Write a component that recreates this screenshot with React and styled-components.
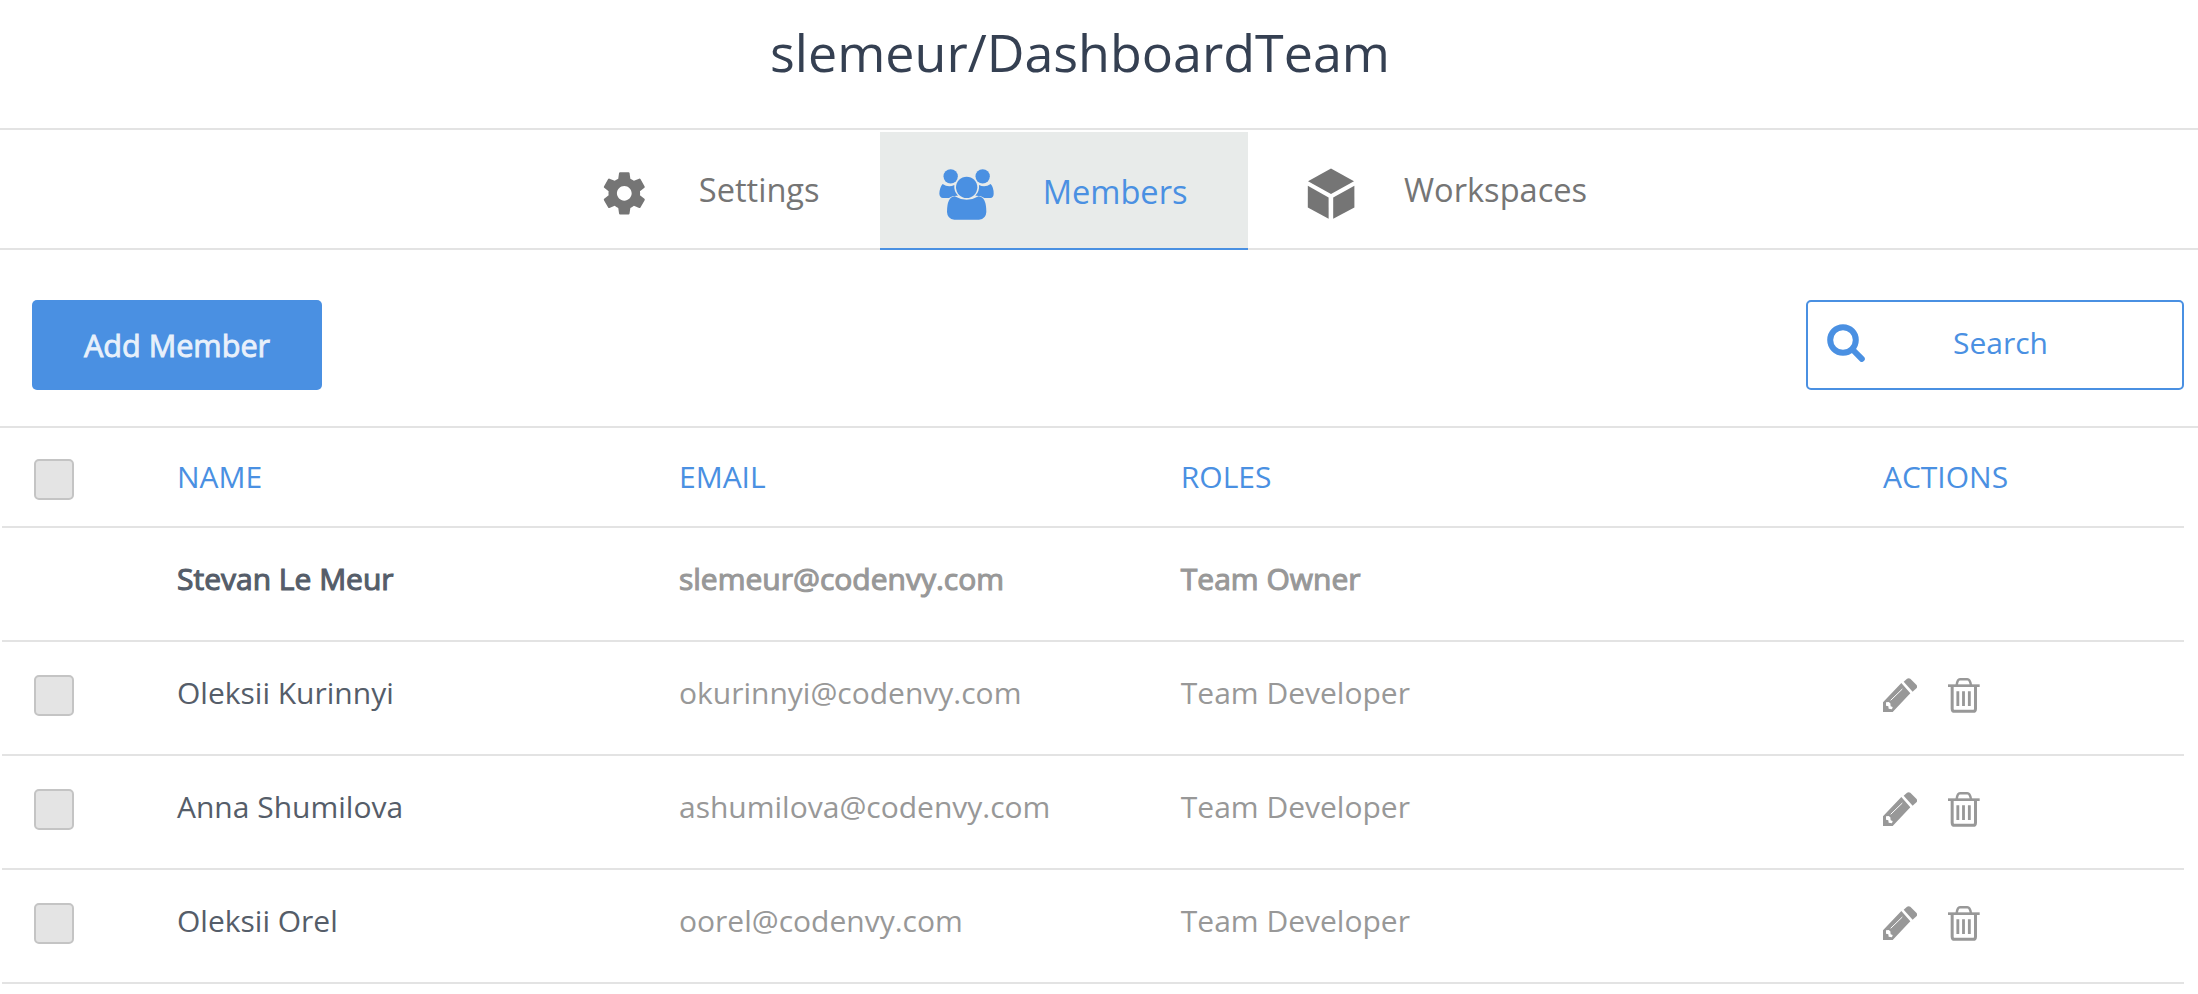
import React from 'react';
import styled, { createGlobalStyle, css } from 'styled-components';

const BLUE = '#4a90e2';
const LINE = '#e3e3e3';

const GlobalStyle = createGlobalStyle`
  *, *::before, *::after { box-sizing: border-box; }
  body {
    margin: 0;
    background: #fff;
    font-family: 'Open Sans', 'Noto Sans', sans-serif;
    overflow: hidden;
  }
`;

const Page = styled.div`
  height: 994px;
  background: #fff;
  display: flex;
  flex-direction: column;
`;

const TitleBar = styled.header`
  flex: none;
  height: 130px;
  padding: 17px 38px 0 0;
  border-bottom: 2px solid ${LINE};
  text-align: center;
`;

const Title = styled.h1`
  margin: 0;
  font-size: 52px;
  line-height: 70px;
  font-weight: 400;
  color: #354052;
`;

const Tabs = styled.nav`
  flex: none;
  height: 120px;
  padding: 2px 0 0 561px;
  display: flex;
  border-bottom: 2px solid ${LINE};
`;

const Tab = styled.button`
  height: 118px;
  width: ${(p) => p.$width}px;
  padding: ${(p) => (p.$active ? 3 : 0)}px 0 0 ${(p) => p.$inset}px;
  border: 0;
  border-bottom: 2px solid ${(p) => (p.$active ? BLUE : 'transparent')};
  background: ${(p) => (p.$active ? '#e8ebea' : 'transparent')};
  color: ${(p) => (p.$active ? BLUE : '#757575')};
  display: flex;
  align-items: center;
  gap: ${(p) => p.$gap}px;
  font: 400 32.6px/44px 'Open Sans', sans-serif;
  text-align: left;

  svg { flex: none; display: block; margin-top: ${(p) => p.$drop}px; }
`;

const Toolbar = styled.div`
  flex: none;
  height: 178px;
  padding: 50px 14px 0 32px;
  display: flex;
  justify-content: space-between;
  align-items: flex-start;
  border-bottom: 2px solid ${LINE};
`;

const AddButton = styled.button`
  width: 290px;
  height: 90px;
  padding: 0;
  border: 0;
  border-radius: 5px;
  background: ${BLUE};
  color: #e8f0fb;
  font: 400 30.6px/40px 'Open Sans', sans-serif;
  -webkit-text-stroke: 0.9px #e8f0fb;
`;

const SearchBox = styled.label`
  width: 378px;
  height: 90px;
  padding-left: 19px;
  border: 2px solid ${BLUE};
  border-radius: 5px;
  display: flex;
  align-items: center;
  gap: 88px;
  color: ${BLUE};
  font-size: 30px;
  line-height: 40px;

  span { padding-bottom: 4px; }
  svg { flex: none; display: block; margin-bottom: 4px; }
`;

const Table = styled.div`
  flex: none;
  padding: 0 14px 0 2px;
`;

const Row = styled.div`
  height: ${(p) => (p.$head ? 100 : 114)}px;
  border-bottom: 2px solid ${LINE};
  padding-left: 32px;
  display: grid;
  grid-template-columns: 143px 502px 501.8px 702.2px 1fr;
  align-items: start;
  padding-top: ${(p) => (p.$head ? 31 : 33)}px;
`;

const Cell = styled.div`
  font-size: 30px;
  line-height: 41px;
  white-space: nowrap;
  color: ${(p) => p.$color};
  margin-top: -3px;
  ${(p) => p.$strong && css`-webkit-text-stroke: 1.1px ${p.$color};`}
`;

const CheckBox = styled.div`
  width: 40px;
  height: 41px;
  border: 2px solid #c4c4c4;
  border-radius: 5px;
  background: #e4e4e4;
`;

const Actions = styled.div`
  display: flex;
  gap: 31px;
  padding-top: 3px;
  svg { display: block; }
`;

const GearIcon = () => (
  <svg width="50.6" height="50.6" viewBox="0 0 24 24" fill="currentColor">
    <path d="M19.43 12.98c.04-.32.07-.64.07-.98s-.03-.66-.07-.98l2.11-1.65c.19-.15.24-.42.12-.64l-2-3.46c-.12-.22-.39-.3-.61-.22l-2.49 1c-.52-.4-1.08-.73-1.69-.98l-.38-2.65C14.46 2.18 14.25 2 14 2h-4c-.25 0-.46.18-.49.42l-.38 2.65c-.61.25-1.17.59-1.69.98l-2.49-1c-.23-.09-.49 0-.61.22l-2 3.46c-.13.22-.07.49.12.64l2.11 1.65c-.04.32-.07.65-.07.98s.03.66.07.98l-2.11 1.65c-.19.15-.24.42-.12.64l2 3.46c.12.22.39.3.61.22l2.49-1c.52.4 1.08.73 1.69.98l.38 2.65c.03.24.24.42.49.42h4c.25 0 .46-.18.49-.42l.38-2.65c.61-.25 1.17-.59 1.69-.98l2.49 1c.23.09.49 0 .61-.22l2-3.46c.12-.22.07-.49-.12-.64l-2.11-1.65zM12 15.5c-1.93 0-3.5-1.57-3.5-3.5s1.57-3.5 3.5-3.5 3.5 1.57 3.5 3.5-1.57 3.5-3.5 3.5z" />
  </svg>
);

const UsersIcon = () => (
  <svg width="55" height="51" viewBox="1076 146 165 153" fill="currentColor">
    <circle cx="1111" cy="168" r="21.5" />
    <circle cx="1207" cy="168" r="21.5" />
    <path d="M1087 191Q1104 203 1122 194Q1120 213 1133 226Q1116 225 1106 233H1088Q1078 232 1077 220Q1078 201 1087 191Z" />
    <path d="M1231 191Q1214 203 1196 194Q1198 213 1185 226Q1202 225 1212 233H1230Q1240 232 1240 220Q1240 201 1231 191Z" />
    <circle cx="1159" cy="201" r="32" />
    <path d="M1123 228Q1159 249 1195 228Q1218 230 1218 275Q1217 296 1196 298H1122Q1101 296 1100 275Q1100 230 1123 228Z" />
  </svg>
);

const CubeIcon = () => (
  <svg width="48" height="51" viewBox="0 0 48 51" fill="currentColor">
    <path d="M24 0.4L47 13.3L24 26L1 13.3Z" />
    <path d="M0.8 17.8L21.6 29.4V50.8L0.8 39.6Z" />
    <path d="M47.4 17.8L26.2 29.4V50.8L47.4 39.6Z" />
  </svg>
);

const SearchIcon = () => (
  <svg width="38" height="38" viewBox="0 0 38 38" fill="none" stroke="currentColor">
    <circle cx="16" cy="16" r="12.8" strokeWidth="6" />
    <path d="M25.5 25.5L34.8 34.9" strokeWidth="6" strokeLinecap="round" />
  </svg>
);

const PencilIcon = () => (
  <svg width="34" height="34" viewBox="129 147 102 102" fill="#989898">
    <path d="M191 158L201 149Q206 146 211 149L229 167Q233 172 230 177L218 188Z" />
    <path fillRule="evenodd" d="M184 162L211 193L158 249H129V220ZM138 220L138 230L145 232L146 239L156 241L158 234L152 232L151 223L146 219Z" />
    <path d="M152 214L187 180" stroke="#fff" strokeWidth="3" />
  </svg>
);

const TrashIcon = () => (
  <svg width="32" height="35" viewBox="324 144 96 105" fill="none" stroke="#989898">
    <path d="M324 167H419" strokeWidth="8" />
    <path d="M350 166Q352 148 360 148H382Q390 148 393 166" strokeWidth="7.5" />
    <path d="M336.500 168V236Q336.500 244 344 244H399Q406.500 244 406.500 236V168" strokeWidth="9" />
    <path d="M353.500 184V228M370.500 184V228M388 184V228" strokeWidth="8.5" />
  </svg>
);

const members = [
  { name: 'Stevan Le Meur', email: 'slemeur@codenvy.com', role: 'Team Owner', owner: true },
  { name: 'Oleksii Kurinnyi', email: 'okurinnyi@codenvy.com', role: 'Team Developer' },
  { name: 'Anna Shumilova', email: 'ashumilova@codenvy.com', role: 'Team Developer' },
  { name: 'Oleksii Orel', email: 'oorel@codenvy.com', role: 'Team Developer' },
];

export default function App() {
  return (
    <Page>
      <GlobalStyle />
      <TitleBar>
        <Title>slemeur/DashboardTeam</Title>
      </TitleBar>
      <Tabs>
        <Tab $width={319} $inset={38} $gap={49.2} $drop={6}><GearIcon />Settings</Tab>
        <Tab $active $width={368} $inset={58.7} $gap={49} $drop={5}><UsersIcon />Members</Tab>
        <Tab $width={400} $inset={59} $gap={49} $drop={6}><CubeIcon />Workspaces</Tab>
      </Tabs>
      <Toolbar>
        <AddButton>Add Member</AddButton>
        <SearchBox><SearchIcon /><span>Search</span></SearchBox>
      </Toolbar>
      <Table>
        <Row $head>
          <CheckBox />
          {['NAME', 'EMAIL', 'ROLES', 'ACTIONS'].map((label) => (
            <Cell key={label} $color={BLUE}>{label}</Cell>
          ))}
        </Row>
        {members.map((m) => (
          <Row key={m.email}>
            {m.owner ? <span /> : <CheckBox />}
            <Cell $color="#555d69" $strong={m.owner}>{m.name}</Cell>
            <Cell $color="#989898" $strong={m.owner}>{m.email}</Cell>
            <Cell $color="#989898" $strong={m.owner}>{m.role}</Cell>
            {!m.owner && <Actions><PencilIcon /><TrashIcon /></Actions>}
          </Row>
        ))}
      </Table>
    </Page>
  );
}
